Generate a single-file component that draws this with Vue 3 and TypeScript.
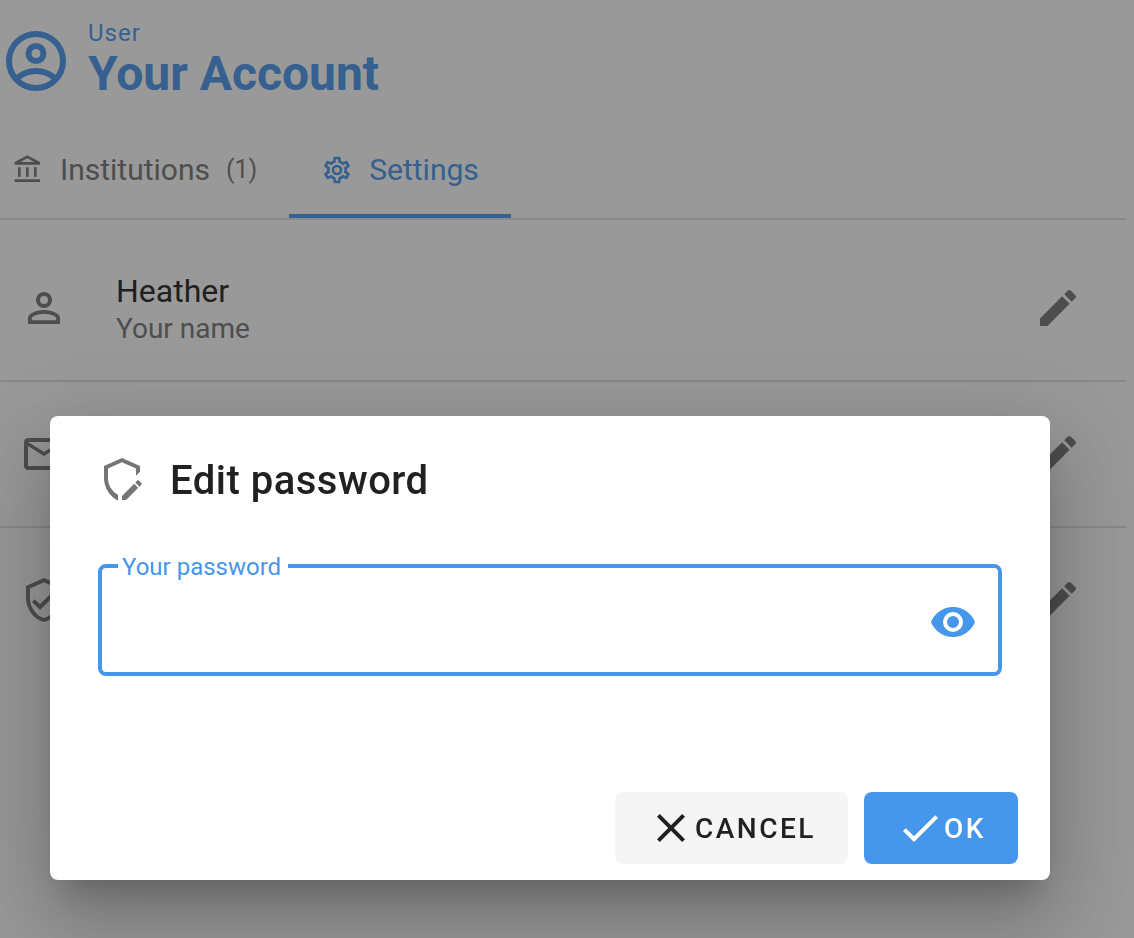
<script setup lang="ts">
import { ref } from 'vue'

interface Row {
  id: string
  title: string
  subtitle: string
  icon: string
}

const icons = {
  bank: 'M6.5,10H4.5V17H6.5V10M12.5,10H10.5V17H12.5V10M21,19H2V21H21V19M18.5,10H16.5V17H18.5V10M11.5,3.26L16.71,6H6.29L11.5,3.26M11.5,1L2,6V8H21V6L11.5,1Z',
  cog: 'M12,8A4,4 0 0,1 16,12A4,4 0 0,1 12,16A4,4 0 0,1 8,12A4,4 0 0,1 12,8M12,10A2,2 0 0,0 10,12A2,2 0 0,0 12,14A2,2 0 0,0 14,12A2,2 0 0,0 12,10M10,22C9.75,22 9.54,21.82 9.5,21.58L9.13,18.93C8.5,18.68 7.96,18.34 7.44,17.94L4.95,18.95C4.73,19.03 4.46,18.95 4.34,18.73L2.34,15.27C2.21,15.05 2.27,14.78 2.46,14.63L4.57,12.97L4.5,12L4.57,11L2.46,9.37C2.27,9.22 2.21,8.95 2.34,8.73L4.34,5.27C4.46,5.05 4.73,4.96 4.95,5.05L7.44,6.05C7.96,5.66 8.5,5.32 9.13,5.07L9.5,2.42C9.54,2.18 9.75,2 10,2H14C14.25,2 14.46,2.18 14.5,2.42L14.87,5.07C15.5,5.32 16.04,5.66 16.56,6.05L19.05,5.05C19.27,4.96 19.54,5.05 19.66,5.27L21.66,8.73C21.79,8.95 21.73,9.22 21.54,9.37L19.43,11L19.5,12L19.43,13L21.54,14.63C21.73,14.78 21.79,15.05 21.66,15.27L19.66,18.73C19.54,18.95 19.27,19.04 19.05,18.95L16.56,17.95C16.04,18.34 15.5,18.68 14.87,18.93L14.5,21.58C14.46,21.82 14.25,22 14,22H10M11.25,4L10.88,6.61C9.68,6.86 8.62,7.5 7.85,8.39L5.44,7.35L4.69,8.65L6.8,10.2C6.4,11.37 6.4,12.64 6.8,13.8L4.68,15.36L5.43,16.66L7.86,15.62C8.63,16.5 9.68,17.14 10.87,17.38L11.24,20H12.76L13.13,17.39C14.32,17.14 15.37,16.5 16.14,15.62L18.57,16.66L19.32,15.36L17.2,13.81C17.6,12.64 17.6,11.37 17.2,10.2L19.31,8.65L18.56,7.35L16.15,8.39C15.38,7.5 14.32,6.86 13.12,6.62L12.75,4H11.25Z',
  account: 'M12,4A4,4 0 0,1 16,8A4,4 0 0,1 12,12A4,4 0 0,1 8,8A4,4 0 0,1 12,4M12,6A2,2 0 0,0 10,8A2,2 0 0,0 12,10A2,2 0 0,0 14,8A2,2 0 0,0 12,6M12,13C14.67,13 20,14.33 20,17V20H4V17C4,14.33 9.33,13 12,13M12,14.9C9.03,14.9 5.9,16.36 5.9,17V18.1H18.1V17C18.1,16.36 14.97,14.9 12,14.9Z',
  email: 'M22 6C22 4.9 21.1 4 20 4H4C2.9 4 2 4.9 2 6V18C2 19.1 2.9 20 4 20H20C21.1 20 22 19.1 22 18V6M20 6L12 11L4 6H20M20 18H4V8L12 13L20 8V18Z',
  shieldCheck: 'M21,11C21,16.55 17.16,21.74 12,23C6.84,21.74 3,16.55 3,11V5L12,1L21,5V11M12,21C15.75,20 19,15.54 19,11.22V6.3L12,3.18L5,6.3V11.22C5,15.54 8.25,20 12,21M10,17L6,13L7.41,11.59L10,14.17L16.59,7.58L18,9',
  shieldEdit: 'M10 22.3C5.9 20.4 3 15.8 3 11V5L12 1L21 5V7.9L19 9.9V6.3L12 3.18L5 6.3V11.22C5 14.4 7.1 17.9 10 19.4V22.3M21.7 14.35L20.7 15.35L18.65 13.3L19.65 12.3C19.86 12.09 20.21 12.09 20.42 12.3L21.7 13.58C21.91 13.79 21.91 14.14 21.7 14.35M12 19.94V22H14.06L20.12 15.93L18.07 13.88L12 19.94Z',
  pencil: 'M20.71,7.04C21.1,6.65 21.1,6 20.71,5.63L18.37,3.29C18,2.9 17.35,2.9 16.96,3.29L15.12,5.12L18.87,8.87M3,17.25V21H6.75L17.81,9.93L14.06,6.18L3,17.25Z',
  eye: 'M12,9A3,3 0 0,0 9,12A3,3 0 0,0 12,15A3,3 0 0,0 15,12A3,3 0 0,0 12,9M12,17A5,5 0 0,1 7,12A5,5 0 0,1 12,7A5,5 0 0,1 17,12A5,5 0 0,1 12,17M12,4.5C7,4.5 2.73,7.61 1,12C2.73,16.39 7,19.5 12,19.5C17,19.5 21.27,16.39 23,12C21.27,7.61 17,4.5 12,4.5Z',
  close: 'M19,6.41L17.59,5L12,10.59L6.41,5L5,6.41L10.59,12L5,17.59L6.41,19L12,13.41L17.59,19L19,17.59L13.41,12L19,6.41Z',
  check: 'M21,7L9,19L3.5,13.5L4.91,12.09L9,16.17L19.59,5.59L21,7Z',
}

const rows: Row[] = [
  { id: 'name', title: 'Heather', subtitle: 'Your name', icon: icons.account },
  { id: 'email', title: '', subtitle: '', icon: icons.email },
  { id: 'password', title: '', subtitle: '', icon: icons.shieldCheck },
]

const password = ref('')
const visible = ref(false)
</script>

<template>
  <div class="page">
    <header class="header">
      <svg class="avatar" viewBox="0 0 24 24" fill="none" stroke="currentColor" stroke-width="2" aria-hidden="true">
        <circle cx="12" cy="12" r="9" />
        <circle cx="12" cy="9.5" r="2.5" />
        <path d="M5.8 17.6Q8.5 15.3 12 15.3T18.2 17.6" />
      </svg>
      <div>
        <div class="overline">User</div>
        <h1 class="heading">Your Account</h1>
      </div>
    </header>

    <nav class="tabs">
      <button class="tab" type="button">
        <svg class="icon-small" viewBox="0 0 24 24" aria-hidden="true"><path :d="icons.bank" /></svg>
        <span>Institutions</span>
        <span class="count">(1)</span>
      </button>
      <button class="tab active" type="button">
        <svg class="icon-small" viewBox="0 0 24 24" aria-hidden="true"><path :d="icons.cog" /></svg>
        <span>Settings</span>
      </button>
    </nav>

    <ul class="list">
      <li v-for="row in rows" :key="row.id" class="row">
        <svg class="icon" viewBox="0 0 24 24" aria-hidden="true"><path :d="row.icon" /></svg>
        <div class="row-text">
          <div class="row-title">{{ row.title }}</div>
          <div class="row-subtitle">{{ row.subtitle }}</div>
        </div>
        <button class="icon-button" type="button" :aria-label="'Edit ' + row.id">
          <svg class="icon" viewBox="0 0 24 24" aria-hidden="true"><path :d="icons.pencil" /></svg>
        </button>
      </li>
    </ul>
  </div>

  <div class="overlay">
    <form class="dialog" role="dialog" aria-labelledby="dialog-title" @submit.prevent>
      <div class="dialog-header">
        <svg class="icon" viewBox="0 0 24 24" aria-hidden="true"><path :d="icons.shieldEdit" /></svg>
        <h2 id="dialog-title" class="dialog-title">Edit password</h2>
      </div>
      <div class="field">
        <label class="field-label" for="password">Your password</label>
        <input id="password" v-model="password" class="field-input" :type="visible ? 'text' : 'password'" />
        <button class="icon-button blue" type="button" aria-label="Show password" @click="visible = !visible">
          <svg class="icon" viewBox="0 0 24 24" aria-hidden="true"><path :d="icons.eye" /></svg>
        </button>
      </div>
      <div class="actions">
        <button class="button" type="button">
          <svg class="icon" viewBox="0 0 24 24" aria-hidden="true"><path :d="icons.close" /></svg>
          <span>CANCEL</span>
        </button>
        <button class="button primary" type="submit">
          <svg class="icon" viewBox="0 0 24 24" aria-hidden="true"><path :d="icons.check" /></svg>
          <span>OK</span>
        </button>
      </div>
    </form>
  </div>
</template>

<style>
body {
  margin: 0;
  background: #fff;
  font-family: Roboto, "Liberation Sans", sans-serif;
}
</style>

<style scoped>
* {
  box-sizing: border-box;
}

button {
  margin: 0;
  border: 0;
  background: none;
  font-family: inherit;
  cursor: pointer;
}

svg {
  display: block;
  flex: none;
}

.page {
  min-height: 100vh;
  padding-right: 8px;
  overflow: hidden;
  color: #212121;
}

.icon,
.avatar,
.icon-small {
  width: 48px;
  height: 48px;
  fill: currentColor;
}

.header {
  display: flex;
  align-items: center;
  gap: 16px;
  height: 122px;
  color: #4696ec;
}

.avatar {
  width: 72px;
  height: 72px;
  fill: none;
}

.overline {
  font-size: 24px;
  line-height: 26px;
  letter-spacing: 1px;
}

.heading {
  margin: 0;
  font-size: 48px;
  line-height: 56px;
  font-weight: 700;
}

.tabs {
  display: flex;
  height: 98px;
  border-bottom: 2px solid #e0e0e0;
}

.tab {
  display: flex;
  align-items: center;
  gap: 16px;
  padding: 4px 32px 0;
  border-bottom: 4px solid transparent;
  color: #757575;
  font-size: 30px;
  line-height: 40px;
}

.tab:first-child {
  padding-left: 12px;
}

.tab.active {
  border-bottom-color: #4696ec;
  color: #4696ec;
}

.icon-small {
  width: 32px;
  height: 32px;
}

.count {
  font-size: 25px;
}

.list {
  margin: 0;
  padding: 16px 0;
  list-style: none;
}

.row {
  display: flex;
  align-items: center;
  height: 144px;
  padding: 0 44px 0 20px;
  color: #757575;
}

.row + .row {
  height: 146px;
  border-top: 2px solid #e0e0e0;
}

.row-text {
  flex: 1;
  margin-left: 48px;
  padding-top: 2px;
}

.row-title {
  color: #212121;
  font-size: 32px;
  line-height: 40px;
}

.row-subtitle {
  font-size: 28px;
  line-height: 36px;
}

.icon-button {
  padding: 0;
  color: inherit;
}

.overlay {
  position: fixed;
  inset: 0;
  display: flex;
  align-items: flex-end;
  padding: 0 84px 58px 50px;
  background: rgba(33, 33, 33, 0.46);
}

.dialog {
  flex: 1;
  border-radius: 8px;
  background: #fff;
  color: #212121;
  box-shadow:
    0 22px 30px -14px rgba(0, 0, 0, 0.2),
    0 48px 76px 6px rgba(0, 0, 0, 0.14),
    0 18px 92px 16px rgba(0, 0, 0, 0.12);
}

.dialog-header {
  display: flex;
  align-items: center;
  gap: 24px;
  height: 128px;
  padding: 0 48px;
  color: #757575;
}

.dialog-title {
  margin: 0;
  padding-top: 2px;
  color: #212121;
  font-size: 40px;
  line-height: 64px;
  font-weight: 500;
  letter-spacing: 0.0125em;
}

.field {
  position: relative;
  display: flex;
  align-items: center;
  height: 112px;
  margin: 20px 48px 100px;
  padding: 4px 21px 0;
  border: 4px solid #4696ec;
  border-radius: 8px;
}

.field-label {
  position: absolute;
  top: -15px;
  left: 16px;
  padding: 0 7px 0 4px;
  background: #fff;
  color: #4696ec;
  font-size: 24px;
  line-height: 28px;
}

.field-input {
  flex: 1;
  height: 64px;
  padding: 0;
  border: 0;
  outline: 0;
  background: none;
  color: #212121;
  font: inherit;
  font-size: 32px;
}

.blue {
  color: #4696ec;
}

.actions {
  display: flex;
  justify-content: flex-end;
  gap: 16px;
  padding: 16px 32px;
}

.button {
  display: flex;
  align-items: center;
  height: 72px;
  padding: 0 32px;
  border-radius: 8px;
  background: #f5f5f5;
  color: #212121;
  font-size: 28px;
  font-weight: 500;
  letter-spacing: 0.09em;
}

.primary {
  background: #4696ec;
  color: #fff;
}
</style>
